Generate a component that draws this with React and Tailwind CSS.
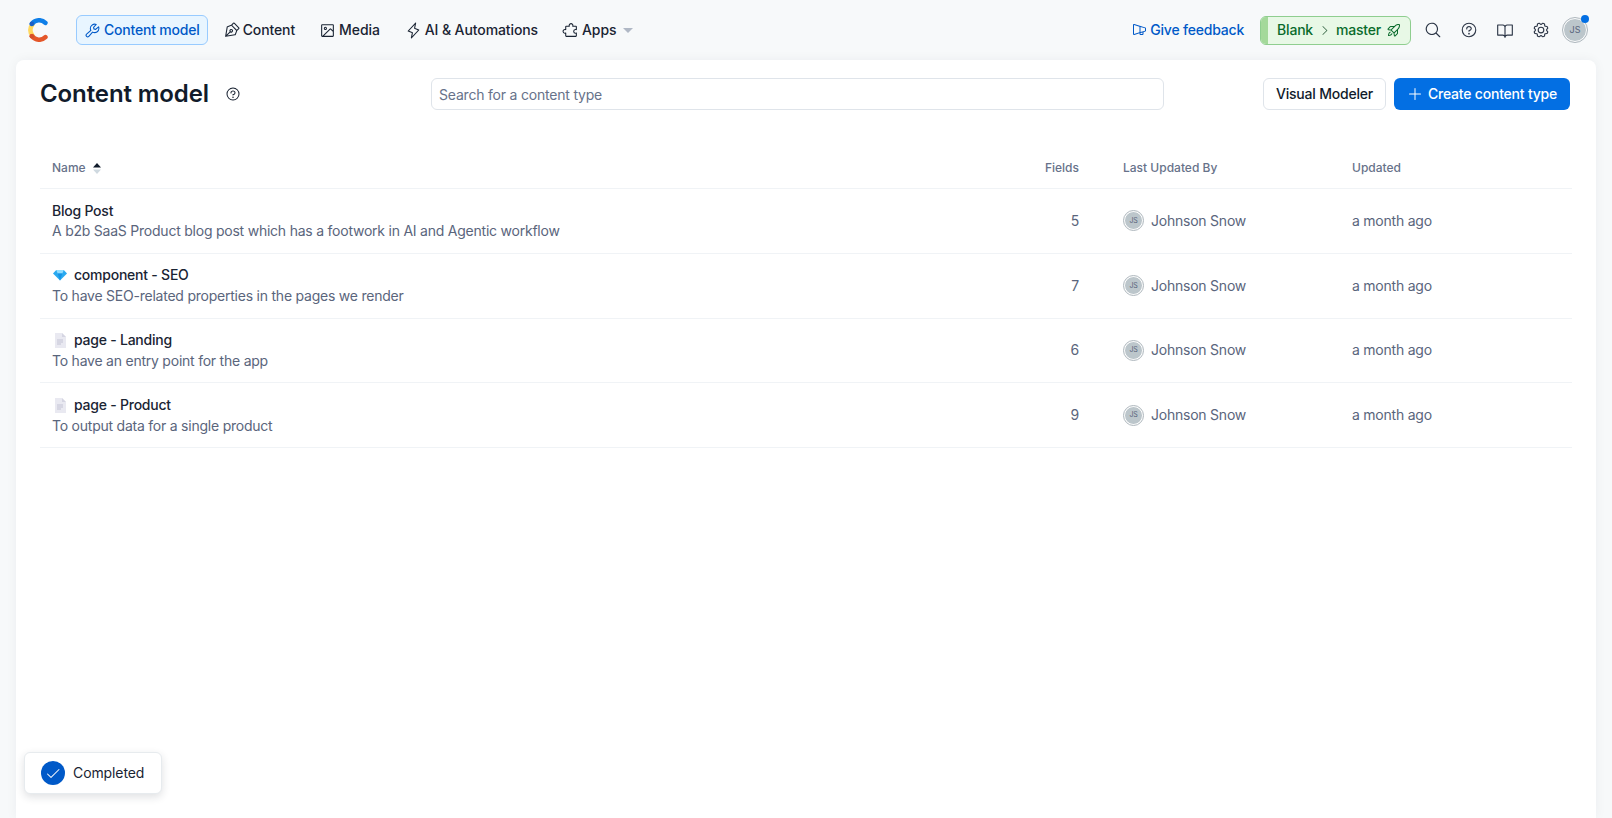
import React from 'react';
import {
  PiWrench,
  PiPenNib,
  PiImageSquare,
  PiLightning,
  PiPuzzlePiece,
  PiMegaphoneSimple,
  PiRocketLaunch,
  PiMagnifyingGlass,
  PiQuestion,
  PiBookOpen,
  PiGear,
  PiPlus,
  PiCaretRight,
  PiCheck,
} from 'react-icons/pi';

const Logo = () => (
  <svg width="24" height="24" viewBox="0 0 24 24" fill="none" strokeWidth="4.6" strokeLinecap="round">
    <path d="M6.6 6.2A8.6 8.6 0 0 0 6.6 17.8" stroke="#FFD85F" />
    <path d="M6 5.8A9 9 0 0 1 19.4 4.8" stroke="#0F7FE8" />
    <path d="M6 18.2A9 9 0 0 0 19.4 19.2" stroke="#E4572A" />
    <circle cx="5.8" cy="5.8" r="2.3" fill="#1C5FC4" />
    <circle cx="5.8" cy="18.2" r="2.3" fill="#D5502A" />
  </svg>
);

const Gem = () => (
  <svg width="14" height="12" viewBox="0 0 14 12">
    <path d="M3.2 1h7.6L14 4.4 7 11.6 0 4.4z" fill="#29a9f0" />
    <path d="M3.2 1h7.6l-1.5 3.4H4.7z" fill="#8fdcff" />
    <path d="M4.7 4.4h4.6L7 11.6z" fill="#1593e6" />
  </svg>
);

const PageIcon = () => (
  <svg width="12" height="15" viewBox="0 0 12 15">
    <path d="M1 0h7l4 4v11H1z" fill="#e9e9f1" />
    <path d="M8 0l4 4H8z" fill="#d5d5e2" />
    <path d="M3 7h6M3 9h6M3 11h4" stroke="#c3c3d4" strokeWidth="1" />
  </svg>
);

const NavItem = ({ icon: Icon, label, active, children }) => (
  <button
    className={
      active
        ? 'flex h-[30px] items-center gap-[3px] rounded-md border border-[#98cbff] bg-[#e8f5ff] px-[7px] text-sm font-medium tracking-[-0.2px] text-[#0059c8]'
        : 'flex h-[30px] items-center gap-[3px] px-2 text-sm font-medium tracking-[-0.1px] text-[#1a2433]'
    }
  >
    <Icon className="text-[17px]" />
    <span>{label}</span>
    {children}
  </button>
);

const Avatar = ({ size }) => (
  <div
    className={
      size === 'lg'
        ? 'flex h-6 w-6 items-center justify-center rounded-full border border-white bg-[#bcc6cb] text-[9px] text-[#5a657c] outline outline-[#aeb7bd]'
        : 'flex h-[19px] w-[19px] items-center justify-center rounded-full border border-white bg-[#bcc6cb] text-[7px] text-[#5a657c] outline outline-[#aeb7bd]'
    }
  >
    JS
  </div>
);

const rows = [
  { name: 'Blog Post', desc: 'A b2b SaaS Product blog post which has a footwork in AI and Agentic workflow', fields: 5 },
  { name: 'component - SEO', desc: 'To have SEO-related properties in the pages we render', fields: 7, icon: <Gem /> },
  { name: 'page - Landing', desc: 'To have an entry point for the app', fields: 6, icon: <PageIcon /> },
  { name: 'page - Product', desc: 'To output data for a single product', fields: 9, icon: <PageIcon /> },
];

const App = () => {
  return (
    <div className="flex h-[818px] flex-col overflow-hidden bg-[#f7f9fa] font-['Inter',sans-serif] text-[#111b2b]">
      {/* Top bar */}
      <div className="flex h-[60px] shrink-0 items-center pl-[26px] pr-[25px]">
        <Logo />
        <div className="ml-[26px] flex items-center gap-[1px]">
          <NavItem icon={PiWrench} label="Content model" active />
          <div className="ml-[6px]">
            <NavItem icon={PiPenNib} label="Content" />
          </div>
          <div className="ml-[7px]">
            <NavItem icon={PiImageSquare} label="Media" />
          </div>
          <div className="ml-[8px]">
            <NavItem icon={PiLightning} label="AI & Automations" />
          </div>
          <div className="ml-[7px]">
            <NavItem icon={PiPuzzlePiece} label="Apps">
              <span className="ml-[4px] h-0 w-0 border-x-[5px] border-t-[5px] border-x-transparent border-t-[#b0b8c5]" />
            </NavItem>
          </div>
        </div>

        <div className="ml-auto flex items-center gap-[3px] text-sm font-medium tracking-[-0.2px] text-[#0059c8]">
          <PiMegaphoneSimple className="text-[16px]" />
          <span>Give feedback</span>
        </div>
        <div className="ml-4 flex h-[29px] items-center overflow-hidden rounded-md border border-[#8fce8f] bg-[#e8f8e6] text-sm font-medium tracking-[-0.2px] text-[#0a6b2c]">
          <div className="h-full w-[7px] bg-[#a4d99a]" />
          <div className="flex items-center pl-[9px] pr-[8px]">
            <span>Blank</span>
            <PiCaretRight className="mx-[5px] text-[13px] text-[#3d6b4c]" />
            <span>master</span>
            <PiRocketLaunch className="ml-[5px] text-[16px]" />
          </div>
        </div>
        <div className="ml-[13px] flex items-center gap-[18px] text-[18px] text-[#2c3646]">
          <PiMagnifyingGlass />
          <PiQuestion />
          <PiBookOpen />
          <PiGear />
          <div className="relative ml-[-5px]">
            <Avatar size="lg" />
            <span className="absolute right-[-2px] top-[-3px] h-2 w-2 rounded-full bg-[#036fe3]" />
          </div>
        </div>
      </div>

      {/* Main card */}
      <div className="relative mx-4 flex-1 rounded-t-lg bg-white px-6 shadow-[0_0_12px_rgba(25,37,50,0.05)]">
        <div className="flex h-[50px] items-end">
          <h1 className="w-[391px] text-[24px] leading-[32px] font-semibold tracking-[-0.1px]">
            <span className="inline-flex items-center gap-4">
              Content model
              <PiQuestion className="text-[16px]" />
            </span>
          </h1>
          <input
            placeholder="Search for a content type"
            className="h-[32px] w-[733px] rounded-md border border-[#dfe4ea] bg-white px-[7px] text-sm tracking-[-0.2px] placeholder:text-[#67728a]"
          />
          <button className="ml-[99px] h-[32px] w-[123px] rounded-md border border-[#dfe4ea] bg-white text-sm font-medium tracking-[-0.2px]">
            Visual Modeler
          </button>
          <button className="ml-2 flex h-[32px] w-[176px] items-center justify-center gap-[5px] rounded-md bg-[#036fe3] text-sm font-medium tracking-[-0.2px] text-white">
            <PiPlus className="text-[16px]" />
            Create content type
          </button>
        </div>

        {/* Table */}
        <div className="mt-[39px]">
          <div className="grid h-[40px] grid-cols-[1fr_60px_272px_220px] items-center border-b border-[#f0f3f6] pb-[1px] pl-3 text-xs font-medium text-[#67728a]">
            <div className="flex items-center gap-[7px]">
              Name
              <svg width="8" height="11" viewBox="0 0 8 11">
                <path d="M4 0l4 4.5H0z" fill="#111b2b" />
                <path d="M4 11l4-4.5H0z" fill="#cfd9e0" />
              </svg>
            </div>
            <div className="pr-[1px] text-right">Fields</div>
            <div className="pl-[43px]">Last Updated By</div>
            <div>Updated</div>
          </div>
          {rows.map((row) => (
            <div
              key={row.name}
              className="grid h-[64.8px] grid-cols-[1fr_60px_272px_220px] items-center border-b border-[#f0f3f6] pl-3 text-sm tracking-[-0.23px] text-[#5a657c]"
            >
              <div>
                <div className="flex h-5 items-center font-medium text-[#1a2433]">
                  {row.icon && <span className="mr-[6px] flex w-[14px] translate-x-[1px] justify-center">{row.icon}</span>}
                  <span className={row.icon ? 'ml-[2px]' : ''}>{row.name}</span>
                </div>
                <div className="mt-[0.5px] h-5 leading-5">{row.desc}</div>
              </div>
              <div className="pr-[1px] text-right">{row.fields}</div>
              <div className="flex items-center gap-[8px] pl-[44px]">
                <Avatar />
                Johnson Snow
              </div>
              <div>a month ago</div>
            </div>
          ))}
        </div>

        {/* Toast */}
        <div className="absolute bottom-[24px] left-2 flex h-[42px] w-[138px] items-center gap-[8px] rounded-md border border-[#e7ebee] bg-white pl-4 text-sm tracking-[-0.1px] text-[#1a2433] shadow-[0_3px_8px_rgba(25,37,50,0.14)]">
          <span className="flex h-6 w-6 items-center justify-center rounded-full bg-[#0059c8] text-white">
            <PiCheck className="text-[16px]" />
          </span>
          Completed
        </div>
      </div>
    </div>
  );
};

export default App;
